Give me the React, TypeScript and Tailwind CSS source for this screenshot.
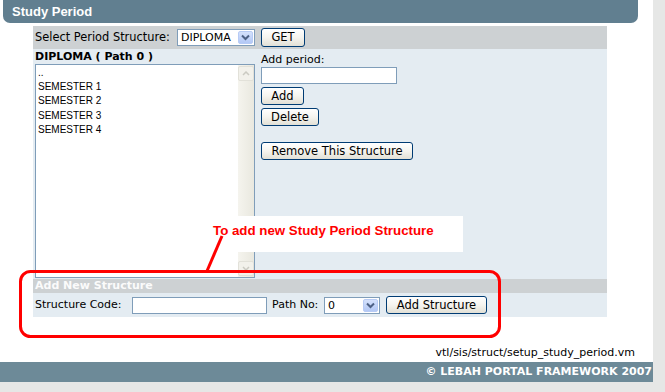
import React from "react";

function cn(...parts: (string | undefined | false)[]) {
    return parts.filter(Boolean).join(" ");
}

function XpButton({ children, className }: { children: React.ReactNode; className?: string }) {
    return (
        <button
            className={cn(
                "flex items-center justify-center rounded-[3px] border border-[#003c74] bg-linear-to-b from-white via-[#f5f4ef] to-[#e2e0d6] pt-px text-[11.5px] leading-none text-black",
                className
            )}
        >
            {children}
        </button>
    );
}

function XpSelect({ value, className }: { value: string; className?: string }) {
    return (
        <div className={cn("flex h-[17px] border border-[#7f9db9] bg-white", className)}>
            <span className="flex-1 pl-[3px] text-[11px] leading-[15px]">{value}</span>
            <span className="m-px flex w-[15px] items-center justify-center rounded-[2px] border border-[#b7cbf5] bg-linear-to-b from-[#d4e1fc] to-[#b3c8f5]">
                <svg width="9" height="7" viewBox="0 0 9 7">
                    <path d="M1 1.5 L4.5 5 L8 1.5" fill="none" stroke="#4d6185" strokeWidth="2" />
                </svg>
            </span>
        </div>
    );
}

function XpInput({ className }: { className?: string }) {
    return <div className={cn("h-[17px] border border-[#7f9db9] bg-white", className)} />;
}

function Listbox({ items }: { items: string[] }) {
    return (
        <div className="flex h-[214px] border border-[#7f9db9] bg-white">
            <ul className="flex-1 pl-[2px] pt-px font-['Liberation_Sans',Arial,sans-serif] text-[10px] leading-[14.2px]">
                {items.map((item) => (
                    <li key={item}>{item}</li>
                ))}
            </ul>
            {/* disabled scrollbar */}
            <div className="flex w-[16px] flex-col justify-between bg-linear-to-r from-[#f5f4ee] to-[#e9e8df] py-px">
                <div className="flex h-[15px] items-center justify-center rounded-[2px] border border-[#e2e1d9] bg-[#f2f1eb]">
                    <svg width="8" height="5" viewBox="0 0 8 5">
                        <path d="M1 4 L4 1 L7 4" fill="none" stroke="#cbcac2" strokeWidth="1.5" />
                    </svg>
                </div>
                <div className="flex h-[15px] items-center justify-center rounded-[2px] border border-[#e2e1d9] bg-[#f2f1eb]">
                    <svg width="8" height="5" viewBox="0 0 8 5">
                        <path d="M1 1 L4 4 L7 1" fill="none" stroke="#cbcac2" strokeWidth="1.5" />
                    </svg>
                </div>
            </div>
        </div>
    );
}

export default function App() {
    const periods = ["..", "SEMESTER 1", "SEMESTER 2", "SEMESTER 3", "SEMESTER 4"];

    return (
        <div className="relative h-[392px] w-[665px] overflow-hidden bg-[#e6e7e6] font-['DejaVu_Sans',Verdana,sans-serif] text-black">
            <div className="flex h-[382px] w-[653px] flex-col bg-white">
                {/* Page title */}
                <div className="ml-[3px] flex h-[23px] w-[635px] items-center rounded-b-[7px] bg-[#617f90] pl-[9px]">
                    <span className="font-['Liberation_Sans',Arial,sans-serif] text-[13px] font-bold text-white">Study Period</span>
                </div>

                {/* Form */}
                <div className="ml-[33px] mt-[3px] w-[574px]">
                    <div className="flex h-[23px] items-center bg-[#cdd1d3] pl-[2px]">
                        <span className="w-[142px] text-[11.4px]">Select Period Structure:</span>
                        <XpSelect value="DIPLOMA" className="w-[78px]" />
                        <XpButton className="ml-[6px] h-[19px] w-[44px]">GET</XpButton>
                    </div>

                    <div className="flex bg-[#e4ecf2] pb-px pl-[2px]">
                        <div className="flex w-[220px] flex-col">
                            <div className="h-[15px] text-[11px] font-bold leading-[15px]">DIPLOMA ( Path 0 )</div>
                            <Listbox items={periods} />
                        </div>
                        <div className="ml-[6px] flex flex-col items-start pt-[3px]">
                            <span className="h-[15px] text-[11px] leading-[15px]">Add period:</span>
                            <XpInput className="w-[136px]" />
                            <XpButton className="mt-[3px] h-[18px] w-[43px]">Add</XpButton>
                            <XpButton className="mt-[3px] h-[18px] w-[58px]">Delete</XpButton>
                            <XpButton className="mt-[16px] h-[18px] w-[152px]">Remove This Structure</XpButton>
                        </div>
                    </div>

                    <div className="h-[14px] bg-[#cdd1d3] pl-[2px] text-[11px] font-bold leading-[14px] text-[#fbfbfb]">
                        Add New Structure
                    </div>
                    <div className="flex h-[24px] items-center bg-[#e4ecf2] pl-[2px]">
                        <span className="w-[97px] text-[11px]">Structure Code:</span>
                        <XpInput className="w-[135px]" />
                        <span className="ml-[5px] w-[52px] text-[11px]">Path No:</span>
                        <XpSelect value="0" className="w-[56px]" />
                        <XpButton className="ml-[6px] h-[18px] w-[101px]">Add Structure</XpButton>
                    </div>
                </div>

                {/* Template path */}
                <div className="flex flex-1 items-end justify-end pb-[3px] pr-[18px]">
                    <span className="text-[11px] leading-[13px]">vtl/sis/struct/setup_study_period.vm</span>
                </div>

                {/* Footer */}
                <div className="flex h-[20px] items-center justify-end bg-[#6d8a98] pr-px">
                    <span className="text-[11px] font-bold text-white">© LEBAH PORTAL FRAMEWORK 2007</span>
                </div>
            </div>

            {/* Annotation callout */}
            <div className="absolute left-[205px] top-[216px] h-[36px] w-[258px] bg-white pl-[8px] pt-[2px]">
                <span className="font-['Liberation_Sans',Arial,sans-serif] text-[13.3px] font-bold leading-[15px] text-[#ff0000]">
                    To add new Study Period Structure
                </span>
            </div>
            <svg className="pointer-events-none absolute left-0 top-0" width="665" height="392">
                <rect x="20.5" y="271.5" width="479" height="65" rx="10" fill="none" stroke="#ff0000" strokeWidth="3" />
                <line x1="207" y1="271" x2="222" y2="236" stroke="#ff0000" strokeWidth="3" />
            </svg>
        </div>
    );
}
